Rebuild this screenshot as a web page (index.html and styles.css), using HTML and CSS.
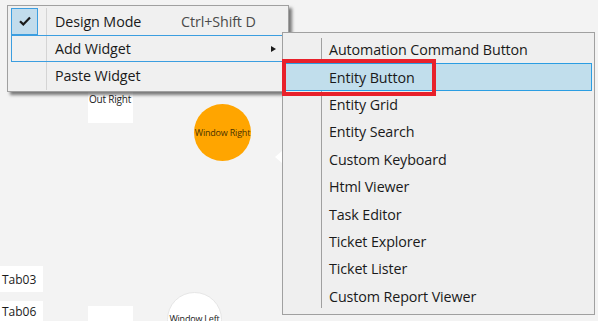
FILE: index.html
```html
<!DOCTYPE html>
<html>
<head>
<meta charset="utf-8">
<link rel="stylesheet" href="styles.css">
</head>
<body>
<div class="canvas">
  <div class="tile out-right">Out Right</div>
  <div class="circle window-right">Window Right</div>
  <div class="pointer"></div>
  <div class="tile tab03">Tab03</div>
  <div class="tile tab06">Tab06</div>
  <div class="tile bottom-tile"></div>
  <div class="circle window-left">Window Left</div>
</div>

<div class="menu main-menu">
  <div class="row">
    <div class="icon"><span class="check"><svg width="12" height="10" viewBox="0 0 12 10"><path d="M1 5.2 L4.3 8.4 L11 1.5" fill="none" stroke="#1a1a1a" stroke-width="2.2"/></svg></span></div>
    <div class="label">Design Mode</div>
    <div class="shortcut">Ctrl+Shift D</div>
  </div>
  <div class="row active">
    <div class="icon"></div>
    <div class="label">Add Widget</div>
    <div class="arrow"></div>
  </div>
  <div class="row">
    <div class="icon"></div>
    <div class="label">Paste Widget</div>
  </div>
</div>

<div class="menu sub-menu">
  <div class="row"><div class="icon"></div><div class="label">Automation Command Button</div></div>
  <div class="row selected"><div class="icon"></div><div class="label">Entity Button</div></div>
  <div class="row"><div class="icon"></div><div class="label">Entity Grid</div></div>
  <div class="row"><div class="icon"></div><div class="label">Entity Search</div></div>
  <div class="row"><div class="icon"></div><div class="label">Custom Keyboard</div></div>
  <div class="row"><div class="icon"></div><div class="label">Html Viewer</div></div>
  <div class="row"><div class="icon"></div><div class="label">Task Editor</div></div>
  <div class="row"><div class="icon"></div><div class="label">Ticket Explorer</div></div>
  <div class="row"><div class="icon"></div><div class="label">Ticket Lister</div></div>
  <div class="row"><div class="icon"></div><div class="label">Custom Report Viewer</div></div>
</div>

<div class="callout"></div>
</body>
</html>
```

FILE: styles.css
```css
html, body {
  margin: 0;
  padding: 0;
  width: 598px;
  height: 321px;
  overflow: hidden;
  background: #f3f3f3;
  font-family: "Open Sans", "Noto Sans", sans-serif;
  color: #1a1a1a;
}

.canvas {
  position: relative;
  width: 598px;
  height: 321px;
  overflow: hidden;
}

.tile {
  position: absolute;
  background: #ffffff;
  box-sizing: border-box;
}

.out-right {
  left: 88px;
  top: 90px;
  width: 45px;
  height: 33px;
  font-size: 10px;
  line-height: 12px;
  padding: 3px 0 0 1px;
  white-space: nowrap;
  letter-spacing: -0.2px;
}

.tab03, .tab06 {
  left: 0;
  width: 43px;
  font-size: 12px;
  padding-left: 2px;
  display: flex;
  align-items: center;
}
.tab03 { top: 266px; height: 26px; }
.tab06 { top: 301px; height: 20px; }

.bottom-tile {
  left: 88px;
  top: 306px;
  width: 45px;
  height: 15px;
}

.circle {
  position: absolute;
  border-radius: 50%;
  display: flex;
  align-items: center;
  justify-content: center;
  font-size: 9px;
  white-space: nowrap;
  letter-spacing: -0.2px;
}
.window-right {
  left: 194px;
  top: 104px;
  width: 57px;
  height: 57px;
  background: #ffa500;
  color: #4a3200;
}
.window-left {
  left: 167px;
  top: 292px;
  width: 55px;
  height: 55px;
  background: #ffffff;
  border: 1px solid #e6e6e6;
  align-items: flex-start;
  padding-top: 19px;
  box-sizing: border-box;
  color: #1a1a1a;
}

.pointer {
  position: absolute;
  left: 275px;
  top: 151px;
  width: 0;
  height: 0;
  border-right: 7px solid #ffffff;
  border-top: 6px solid transparent;
  border-bottom: 6px solid transparent;
}

/* menus */
.menu {
  position: absolute;
  box-sizing: border-box;
  border: 1px solid #a0a0a0;
  display: flex;
  flex-direction: column;
  font-size: 14.3px;
  letter-spacing: -0.1px;
}

.main-menu {
  left: 7px;
  top: 5px;
  width: 282px;
  height: 87px;
  padding: 2px 0 2px 3px;
  background: #f0f0f0 linear-gradient(to right, #d4d4d4, #d4d4d4) no-repeat 38px 2px / 1px 82px;
  box-shadow: 3px 3px 3px rgba(0, 0, 0, 0.5);
}

.main-menu .row {
  display: flex;
  align-items: center;
  height: 27px;
  box-sizing: border-box;
  border: 1px solid transparent;
  width: 285px;
}
.main-menu .row.active {
  border-color: #3c9ee0;
}
.main-menu .icon {
  width: 27px;
  height: 27px;
  margin: -1px 17px 0 -1px;
  display: flex;
}
.check {
  width: 27px;
  height: 27px;
  box-sizing: border-box;
  background: #c2dcec;
  border: 1px solid #3c9ee0;
  display: flex;
  align-items: center;
  justify-content: center;
}
.check svg { margin-top: -1px; }

.main-menu .label {
  width: 126px;
}
.shortcut {
  color: #4a4a4a;
}
.arrow {
  margin-left: 90px;
  width: 0;
  height: 0;
  border-left: 5px solid #1a1a1a;
  border-top: 3.5px solid transparent;
  border-bottom: 3.5px solid transparent;
}

.sub-menu {
  left: 282px;
  top: 32px;
  width: 313px;
  height: 283px;
  padding: 3px 2px 3px 0;
  background: #efefef linear-gradient(to right, #a0a0a0, #a0a0a0) no-repeat 38px 5px / 1px 270px;
}
.sub-menu .row {
  display: flex;
  align-items: center;
  height: 27.4px;
  box-sizing: border-box;
  border: 1px solid transparent;
}
.sub-menu .row.selected {
  background: #c1deec;
  border-color: #2b9de2;
}
.sub-menu .icon {
  width: 45px;
  flex: none;
}

.callout {
  position: absolute;
  left: 282px;
  top: 59px;
  width: 154px;
  height: 37px;
  box-sizing: border-box;
  border: 4px solid #e8212b;
}
```
